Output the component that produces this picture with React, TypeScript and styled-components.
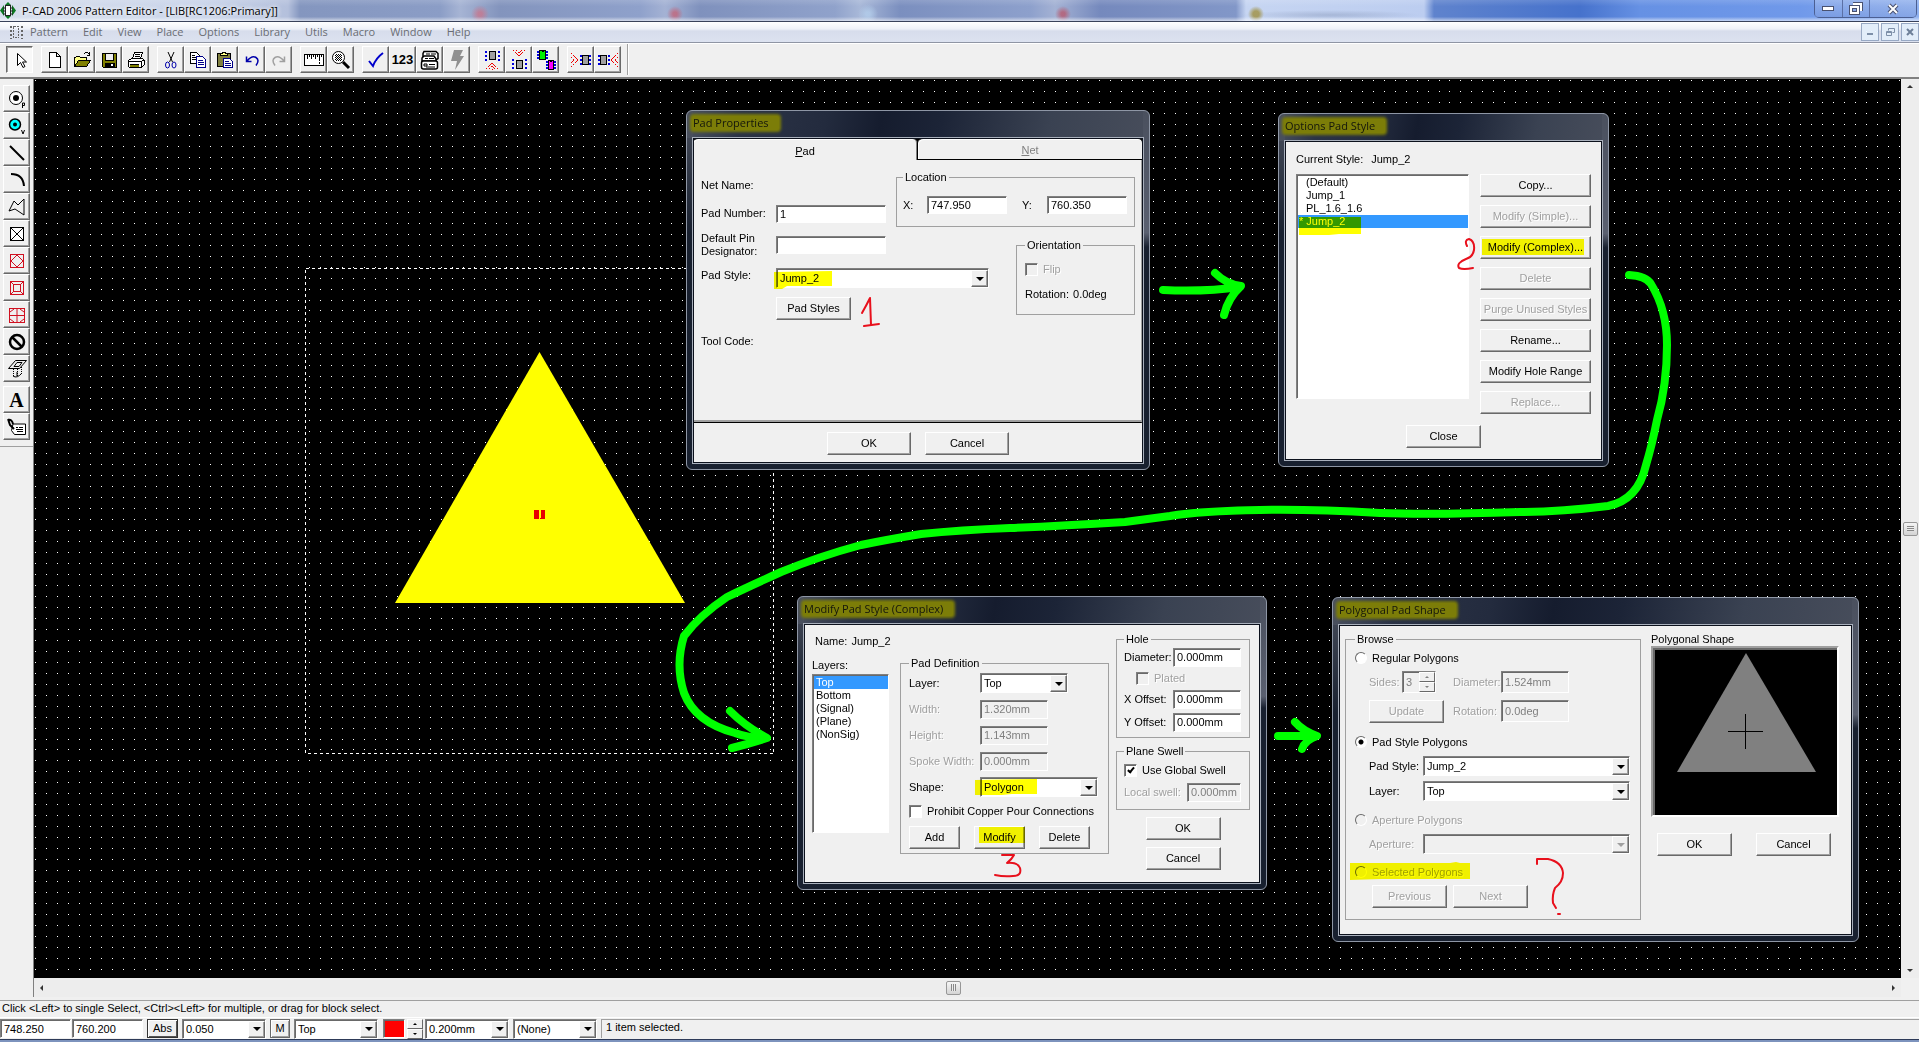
import React from "react";
import styled, { createGlobalStyle, css } from "styled-components";

const uiFont = '"Liberation Sans", Arial, sans-serif';
const chromeFont = '"Open Sans", "Noto Sans", sans-serif';
const face = "#f0f0f0";
const shade = "#a0a0a0";
const dark = "#696969";

const Global = createGlobalStyle`
  *, *::before, *::after { box-sizing: border-box; }
  html, body { margin: 0; padding: 0; height: 100%; overflow: hidden; }
  body { background: ${face}; font: 11px/13px ${uiFont}; color: #000; }
  button, input, select { font: inherit; color: inherit; margin: 0; }
`;

const Shell = styled.div`
  display: flex;
  flex-direction: column;
  height: 100vh;
`;

/* ---------- window chrome ---------- */

const TitleBar = styled.header`
  display: flex;
  align-items: center;
  height: 22px;
  padding-right: 2px;
  border-bottom: 1px solid #39425a;
  font: 11px/20px ${chromeFont};
  background:
    linear-gradient(#ffffff22, #ffffff00 30%, #ffffff00 80%, #ffffff99),
    radial-gradient(circle at 480px 14px, #e0607088 2px, #e0607000 9px),
    radial-gradient(circle at 675px 14px, #d0506099 2px, #d0506000 8px),
    radial-gradient(circle at 868px 14px, #b8d4f0aa 2px, #b8d4f000 10px),
    radial-gradient(circle at 1063px 14px, #c0405099 2px, #c0405000 8px),
    radial-gradient(circle at 1256px 14px, #a09040cc 3px, #a0904000 8px),
    radial-gradient(ellipse 90px 5px at 1330px 15px, #8090b066, #8090b000),
    linear-gradient(90deg, #d6deec 0, #c9d4ea 200px, #b4c0dc 288px, #8496bf 300px,
      #8b9dc6 440px, #a6b4d4 460px, #8394bd 500px, #8fa1cb 640px, #a4b2d4 665px,
      #7f91bd 700px, #90a2cb 835px, #a8b8d8 860px, #7b8fbf 900px, #8da0cc 1030px,
      #a4b2d4 1055px, #7589bd 1100px, #8297c8 1236px, #c6d5f2 1246px, #bccdf0 1424px,
      #5f83cd 1434px, #4672cc 1580px, #6691e4 1640px, #7099ea 1800px, #8fb1f0 100%);
`;
const AppName = styled.h1`
  flex: 1;
  margin: 0 0 0 5px;
  font: inherit;
  text-shadow: 0 0 5px #fff, 0 0 5px #fff;
`;
const Caption = styled.div`
  display: flex;
  align-self: flex-start;
  height: 18px;
  border: 1px solid #4b5f92;
  border-top: 0;
  border-radius: 0 0 5px 5px;
`;
const CaptionButton = styled.button<{ $wide?: boolean }>`
  display: grid;
  place-items: center;
  width: ${(p) => (p.$wide ? 47 : 27)}px;
  padding: 0;
  border: 0;
  background: linear-gradient(#a9c0ee88, #7d9bdc88);
  & + & { border-left: 1px solid #5b70a6; }
`;

const MenuBar = styled.nav`
  display: flex;
  align-items: center;
  gap: 15px;
  height: 21px;
  padding-left: 9px;
  border-bottom: 1px solid #8f95a4;
  background: linear-gradient(#fff 0, #eef1f8 35%, #d7ddec 45%, #dce2f0 100%);
  font: 11px/18px ${chromeFont};
  color: #6a6d74;
`;
const MenuItem = styled.a`
  color: inherit;
  text-decoration: none;
`;
const MenuGlyph = styled.svg`
  margin-right: -8px;
`;
const ChildButtons = styled.div`
  display: flex;
  gap: 2px;
  margin-left: auto;
`;
const ChildButton = styled.button`
  display: grid;
  place-items: center;
  width: 18px;
  height: 18px;
  padding: 0;
  border: 1px solid #98a9c4;
  background: #e2edf9;
`;

/* ---------- tool bars ---------- */

const TopTools = styled.div`
  display: flex;
  align-items: center;
  gap: 8px;
  height: 36px;
  padding: 0 0 2px 6px;
  border-top: 1px solid #fff;
  border-bottom: 2px solid #808080;
`;
const ToolGroup = styled.div<{ $vertical?: boolean }>`
  display: flex;
  flex-direction: ${(p) => (p.$vertical ? "column" : "row")};
`;
const ToolEnd = styled.div`
  align-self: stretch;
  width: 2px;
  margin-left: -2px;
  border-left: 1px solid ${shade};
  background: #fff;
`;
const ToolButton = styled.button<{ $pressed?: boolean }>`
  display: grid;
  place-items: center;
  width: 27px;
  height: 27px;
  padding: 0;
  border: 1px solid;
  border-color: #fff ${dark} ${dark} #fff;
  background: ${face};
  box-shadow: inset -1px -1px 0 ${shade};
  ${(p) =>
    p.$pressed &&
    css`
      border-color: ${dark} #fff #fff ${dark};
      background: #f8f8f8;
      box-shadow: inset 1px 1px 0 ${shade};
    `}
`;
const Sidebar = styled.aside`
  width: 34px;
  flex: none;
  border-right: 1px solid #808080;
`;
const SideTools = styled.div`
  display: flex;
  flex-direction: column;
  gap: 4px;
  padding: 6px 0 6px 3px;
  border-bottom: 1px solid ${shade};
`;

/* ---------- work area ---------- */

const Main = styled.main`
  display: flex;
  flex: 1;
  min-height: 0;
`;
const Workspace = styled.div`
  display: grid;
  flex: 1;
  min-width: 0;
  grid-template: minmax(0, 1fr) 19px / minmax(0, 1fr) 18px;
`;
const Canvas = styled.section`
  position: relative;
  overflow: hidden;
  isolation: isolate;
  background: #000;
`;
const Layer = styled.svg<{ $multiply?: boolean }>`
  position: absolute;
  inset: 0;
  width: 100%;
  height: 100%;
  pointer-events: none;
  mix-blend-mode: ${(p) => (p.$multiply ? "multiply" : "normal")};
`;
const ScrollTrack = styled.div<{ $vertical?: boolean }>`
  display: flex;
  flex-direction: ${(p) => (p.$vertical ? "column" : "row")};
  align-items: center;
  justify-content: space-between;
  padding: ${(p) => (p.$vertical ? "6px 0" : "0 6px")};
  background: #ededed;
`;
const ScrollThumb = styled.div<{ $before?: number }>`
  display: grid;
  place-items: center;
  width: 15px;
  height: 14px;
  margin-right: ${(p) => p.$before ?? 0}px;
  border: 1px solid #979797;
  border-radius: 2px;
  background: linear-gradient(#f5f5f5, #d4d4d4);
`;
const Grip = styled.span<{ $vertical?: boolean }>`
  width: ${(p) => (p.$vertical ? 7 : 5)}px;
  height: ${(p) => (p.$vertical ? 5 : 7)}px;
  background: repeating-linear-gradient(${(p) => (p.$vertical ? "180deg" : "90deg")}, #888 0 1px, #eee 1px 2px);
`;

/* ---------- dialogs ---------- */

const Dialog = styled.section<{ $x: number; $y: number; $w: number }>`
  position: absolute;
  left: ${(p) => p.$x}px;
  top: ${(p) => p.$y}px;
  width: ${(p) => p.$w}px;
  padding: 0 5px 5px;
  border: 1px solid #8e96a5;
  border-radius: 6px;
  background:
    linear-gradient(#4a505e, #4a505e00 34%) left / 6px 100% no-repeat,
    linear-gradient(#4a505e 0, #5a6070 34%, #18202f 38%) right / 6px 100% no-repeat,
    linear-gradient(100deg, #4a5160 0, #2b3346 12%, #232b3e 30%, #151c2e 42%, #1c2437 55%, #3a4252 78%, #474d5b 100%) top / 100% 27px no-repeat,
    #18202f;
`;
const DialogTitle = styled.h2`
  display: flex;
  align-items: center;
  height: 26px;
  margin: 0;
  padding-bottom: 2px;
  font: 11px/14px ${chromeFont};
  color: #14160c;
  span {
    padding: 0 10px 0 1px;
    background: #7c7d08;
    border-radius: 2px;
    box-shadow: 0 0 3px 2px #7c7d08;
  }
`;
const Client = styled.div<{ $pad?: string }>`
  padding: ${(p) => p.$pad ?? "0"};
  border: 1px solid #a9b0bc;
  outline: 1px solid #0c111c;
  outline-offset: -2px;
  background: ${face};
`;
const Row = styled.div<{ $h?: number; $gap?: number; $indent?: number; $align?: string; $mt?: number }>`
  display: flex;
  align-items: ${(p) => p.$align ?? "center"};
  gap: ${(p) => p.$gap ?? 0}px;
  margin-top: ${(p) => p.$mt ?? 0}px;
  min-height: ${(p) => p.$h ?? 0}px;
  padding-left: ${(p) => p.$indent ?? 0}px;
`;
const Centered = styled(Row)`
  justify-content: center;
`;
const Column = styled.div<{ $gap?: number; $w?: number; $center?: boolean }>`
  display: flex;
  flex-direction: column;
  gap: ${(p) => p.$gap ?? 0}px;
  width: ${(p) => (p.$w ? p.$w + "px" : "auto")};
  align-items: ${(p) => (p.$center ? "center" : "stretch")};
`;
const Push = styled.button<{ $w: number }>`
  width: ${(p) => p.$w}px;
  height: 23px;
  flex: none;
  padding: 0;
  border: 1px solid;
  border-color: #fff ${dark} ${dark} #fff;
  background: ${face};
  box-shadow: inset -1px -1px 0 ${shade};
  white-space: nowrap;
  &:disabled { color: ${shade}; text-shadow: 1px 1px 0 #fff; }
`;
const sunken = css`
  border: 1px solid;
  border-color: #808080 #fff #fff #808080;
  box-shadow: inset 1px 1px 0 ${dark};
  border-radius: 0;
`;
const TextBox = styled.input<{ $w: number; $h?: number }>`
  ${sunken}
  width: ${(p) => p.$w}px;
  height: ${(p) => p.$h ?? 19}px;
  flex: none;
  padding: 0 2px 0 3px;
  background: #fff;
  &:disabled { background: ${face}; color: #808080; }
`;
const Label = styled.label<{ $w?: number; $off?: boolean }>`
  flex: none;
  width: ${(p) => (p.$w ? p.$w + "px" : "auto")};
  color: ${(p) => (p.$off ? shade : "#000")};
  text-shadow: ${(p) => (p.$off ? "1px 1px 0 #fff" : "none")};
  white-space: nowrap;
`;
const Group = styled.fieldset<{ $w?: number; $pad?: string }>`
  min-width: 0;
  width: ${(p) => (p.$w ? p.$w + "px" : "auto")};
  margin: 0;
  padding: ${(p) => p.$pad ?? "0 8px"};
  border: 1px solid ${shade};
  outline: 0;
`;
const Legend = styled.legend`
  padding: 0 2px;
`;
const ComboFrame = styled.span<{ $w: number; $off?: boolean }>`
  ${sunken}
  display: flex;
  flex: none;
  width: ${(p) => p.$w}px;
  height: 20px;
  padding: 1px 0 0 1px;
  background: ${(p) => (p.$off ? face : "#fff")};
`;
const ComboSelect = styled.select`
  flex: 1;
  min-width: 0;
  padding: 0 0 0 2px;
  border: 0;
  appearance: none;
  background: transparent;
  outline: 0;
`;
const ComboArrow = styled.span`
  display: grid;
  place-items: center;
  width: 17px;
  border: 1px solid;
  border-color: #fff ${dark} ${dark} #fff;
  background: ${face};
  box-shadow: inset -1px -1px 0 ${shade};
  pointer-events: none;
`;
const ListBox = styled.select<{ $h: number }>`
  ${sunken}
  width: 100%;
  height: ${(p) => p.$h}px;
  padding: 1px 0 0 1px;
  background: #fff;
  overflow: hidden;
  outline: 0;
  option {
    min-height: 13px;
    padding: 0 2px;
    line-height: 13px;
  }
  option:checked {
    color: #fff;
    background: #3399ff linear-gradient(#3399ff, #3399ff);
  }
`;
const StyleOption = styled.option<{ $current?: boolean }>`
  && { padding-left: ${(p) => (p.$current ? 1 : 8)}px; }
`;
const Check = styled.input`
  ${sunken}
  appearance: none;
  position: relative;
  flex: none;
  width: 13px;
  height: 13px;
  background: #fff;
  &:disabled { background: ${face}; }
  &:checked::after {
    content: "";
    position: absolute;
    left: 4px;
    top: 1px;
    width: 4px;
    height: 7px;
    border: solid #000;
    border-width: 0 2px 2px 0;
    transform: rotate(40deg);
  }
`;
const Radio = styled.input`
  appearance: none;
  flex: none;
  width: 12px;
  height: 12px;
  border: 1px solid;
  border-color: ${dark} #fff #fff ${dark};
  border-radius: 50%;
  background: #fff;
  &:disabled { background: ${face}; }
  &:checked { background: radial-gradient(circle, #000 2px, #fff 3px); }
`;

const Tabs = styled.div`
  display: flex;
  height: 22px;
  background: #000;
`;
const Tab = styled.button<{ $active?: boolean }>`
  flex: 1;
  padding: 3px 0 0;
  border: 1px solid #000;
  border-width: 1px 1px ${(p) => (p.$active ? 0 : 1)}px 0;
  border-radius: 5px 5px 0 0;
  background: ${face};
  color: ${(p) => (p.$active ? "#000" : "#808080")};
  box-shadow: ${(p) => (p.$active ? "inset -1px 0 0 #808080, inset 1px 1px 0 #fff" : "inset 1px 1px 0 #fff")};
`;
const TabPanel = styled.div`
  display: grid;
  grid-template-columns: 75px 120px 120px 119px;
  grid-template-rows: 29px 27px 36px 30px 31px 34px;
  align-items: center;
  min-height: 263px;
  padding: 11px 0 0 7px;
  border-left: 1px solid #fff;
  border-right: 2px solid ${shade};
  border-bottom: 1px solid #000;
  box-shadow: inset 0 -2px 0 ${shade};
`;
const Cell = styled.div<{ $area: string; $fill?: boolean; $lift?: number; $foot?: boolean }>`
  grid-area: ${(p) => p.$area};
  align-self: ${(p) => (p.$fill ? "stretch" : p.$foot ? "end" : "center")};
  padding-bottom: ${(p) => p.$lift ?? 0}px;
  & > fieldset { height: 100%; }
`;
const Preview = styled.div`
  width: 188px;
  height: 171px;
  border: 2px solid;
  border-color: ${shade} #fff #fff ${shade};
  background: #000;
  box-shadow: inset 2px 2px 0 ${dark};
`;
const SpinStack = styled.span`
  display: flex;
  flex-direction: column;
  flex: none;
`;
const SpinButton = styled.button`
  display: grid;
  place-items: center;
  width: 16px;
  height: 10px;
  padding: 0;
  border: 1px solid;
  border-color: #fff ${dark} ${dark} #fff;
  background: ${face};
`;
const SpinFrame = styled.span`
  ${sunken}
  display: flex;
  flex: none;
  width: 34px;
  height: 22px;
  margin-right: 17px;
  background: ${face};
  input {
    flex: 1;
    min-width: 0;
    padding: 0 0 0 3px;
    border: 0;
    background: transparent;
    color: #808080;
  }
`;

/* ---------- status ---------- */

const Prompt = styled.div`
  height: 18px;
  margin-top: 3px;
  padding-left: 2px;
  border-top: 1px solid ${shade};
  border-bottom: 1px solid #fff;
  line-height: 15px;
`;
const StatusRow = styled.footer`
  display: flex;
  align-items: center;
  height: 21px;
  gap: 4px;
`;
const Coords = styled.div`
  display: flex;
  gap: 1px;
`;
const StatusButton = styled.button<{ $w: number; $on?: boolean }>`
  width: ${(p) => p.$w}px;
  height: 19px;
  padding: 0;
  border: 1px solid ${(p) => (p.$on ? "#333" : dark)};
  background: ${face};
  box-shadow: inset 1px 1px 0 #fff, inset -1px -1px 0 ${(p) => (p.$on ? "#555" : shade)};
`;
const LineWidth = styled.div`
  display: flex;
  align-items: center;
  gap: 2px;
  padding-left: 1px;
`;
const Swatch = styled.span`
  ${sunken}
  width: 22px;
  height: 19px;
  background: #f00;
`;
const Selected = styled.output`
  flex: 1;
  height: 19px;
  padding: 1px 0 0 4px;
  border-top: 1px solid ${shade};
  border-left: 1px solid ${shade};
`;
const Taskbar = styled.div`
  height: 3px;
  border-top: 1px solid #2d3a58;
  background: #7d93bd;
`;

/* ---------- glyphs ---------- */

const Arrow = ({ dir, color = "#000", size = 4 }: { dir: "up" | "down" | "left" | "right"; color?: string; size?: number }) => {
  const s = size;
  const pts = {
    up: `0,${s} ${s},0 ${2 * s},${s}`,
    down: `0,0 ${2 * s},0 ${s},${s}`,
    left: `${s},0 ${s},${2 * s} 0,${s}`,
    right: `0,0 0,${2 * s} ${s},${s}`,
  }[dir];
  const flat = dir === "up" || dir === "down";
  return (
    <svg width={flat ? 2 * s : s} height={flat ? s : 2 * s} aria-hidden="true">
      <polygon points={pts} fill={color} />
    </svg>
  );
};

const Icon = ({ children, crisp = true }: { children: React.ReactNode; crisp?: boolean }) => (
  <svg width="22" height="22" viewBox="0 0 22 22" fill="none" stroke="#000" shapeRendering={crisp ? "crispEdges" : "auto"} aria-hidden="true">
    {children}
  </svg>
);

const Chip = ({ x, y, fill, w = 7 }: { x: number; y: number; fill: string; w?: number }) => (
  <g>
    <path d={`M${x - 2} ${y + 1.5}h${w + 4}M${x - 2} ${y + 4.5}h${w + 4}M${x - 2} ${y + 7.5}h${w + 4}`} stroke="#00d" strokeWidth="2" />
    <rect x={x + 0.5} y={y + 0.5} width={w - 1} height="9" fill={fill} />
    <path d={`M${x + w / 2 - 1} ${y + 1.5}h2`} />
  </g>
);

const icons: Record<string, React.ReactNode> = {
  select: <Icon crisp={false}><path d="M8.500 4.500v12l3-3 2.500 5 2-1-2.500-4.500h4z" fill="#fff" /></Icon>,
  create: <Icon><path d="M5.500 3.500h7l4 4v11h-11zM12.500 3.500v4h4" fill="#fff" /></Icon>,
  open: <Icon><path d="M3.500 17.500v-9h1l1-1h3l1 1h6v3" fill="#ff8" /><path d="M3.500 17.500l4-6h12l-4 6z" fill="#808000" /><path d="M12.500 5.500l2-2h2l2 2M18.500 3v3.500h-3" /></Icon>,
  save: <Icon><path d="M4.500 4.500h14v14h-13l-1-1z" fill="#808000" /><rect x="7.500" y="4.500" width="8" height="7" fill="#eee" /><path d="M7 14h9v4h-9z" fill="#000" /><path d="M13 15.500h2M13 16.500h2" stroke="#fff" /></Icon>,
  print: <Icon><path d="M7.500 9.500l2-6h8l-2 6z" fill="#fff" /><path d="M10 5.500h5M9.500 7.500h5" /><path d="M3.500 11.500l3-2h11l2 2v4l-3 3h-12l-1-1z" fill="#fff" /><path d="M3.500 12.500h13l3-2M16.500 12.500v6M5 15.500h9" /><path d="M5 17h9" stroke="#808000" strokeWidth="2" /></Icon>,
  cut: <Icon crisp={false}><path d="M8 3l4.500 10M14 3L9.500 13" /><ellipse cx="7.500" cy="16" rx="2" ry="3" stroke="#00a" /><ellipse cx="14" cy="16" rx="2" ry="3" stroke="#00a" /></Icon>,
  copy: <Icon><path d="M3.500 3.500h6l3 3v8h-9z" fill="#fff" /><path d="M5 6.500h3M5 8.500h5M5 10.500h5" /><path d="M9.500 7.500h6l3 3v8h-9z" fill="#fff" stroke="#008" /><path d="M11 11.500h5M11 13.500h6M11 15.500h6" stroke="#008" /></Icon>,
  paste: <Icon><rect x="3.500" y="4.500" width="13" height="13" rx="1" fill="#808040" /><path d="M6.500 6.500h7v-2h-2v-1h-3v1h-2z" fill="#ff8" /><path d="M9.500 9.500h6l3 3v6h-9z" fill="#fff" stroke="#008" /><path d="M11 12.500h4M11 14.500h6M11 16.500h6" stroke="#008" /></Icon>,
  undo: <Icon crisp={false}><path d="M5.500 7.500v5h5M6 12q5-6 9-3.500t0 8" stroke="#00a" strokeWidth="1.500" /></Icon>,
  redo: <Icon crisp={false}><path d="M16.500 7.500v5h-5M16 12q-5-6-9-3.500t0 8" stroke="#a0a0a0" strokeWidth="1.500" /></Icon>,
  ruler: <Icon><rect x="1.500" y="5.500" width="19" height="11" fill="#fff" /><path d="M4.500 6v4M6.500 6v2M8.500 6v4M10.500 6v2M12.500 6v4M14.500 6v2M16.500 6v6M18.500 6v2M16.500 13v2" /></Icon>,
  zoom: <Icon crisp={false}><circle cx="8.500" cy="8.500" r="6" fill="#fff" /><path d="M5 6.500h7M5 8.500h7M5 10.500h7M6.500 5v7M8.500 5v7M10.500 5v7" strokeDasharray="1 1" /><path d="M13 13l6 6" strokeWidth="3" /></Icon>,
  check: <Icon crisp={false}><path d="M4 12l4 5q3-8 10-13" stroke="#00c" strokeWidth="2" /></Icon>,
  layers: <Icon crisp={false}><path d="M5 2.500h12l2 2v5l-3 2H6l-2-2v-5z" fill="#fff" strokeWidth="1.500" /><path d="M3 12V9l2-2h10l2 3v2z" fill="#fff" strokeWidth="1.500" /><rect x="2.500" y="12" width="16" height="8" rx="2" fill="#fff" strokeWidth="1.500" /><path d="M7 5h4M12 5h5M6 9.500h3M10 9.500h5M5 15h3v2H5zM10 15.500h6M7 18h9" /></Icon>,
  bolt: <Icon crisp={false}><path d="M8 1h9l-3 6h4l-9 14 2-9H5z" fill="#909090" stroke="none" /></Icon>,
  align1: <Icon><path d="M4.500 2v10M17.500 2v10" stroke="#00d" strokeWidth="2" strokeDasharray="2 2" /><rect x="8.500" y="2.500" width="6" height="8" fill="#a0a0a0" /><path d="M5 20l6-6 6 6M8 20l3-3 3 3M10.500 20h1" stroke="#e00" strokeDasharray="2 1" /></Icon>,
  align2: <Icon><path d="M4.500 10v10M17.500 10v10" stroke="#00d" strokeWidth="2" strokeDasharray="2 2" /><rect x="8.500" y="11.500" width="6" height="8" fill="#a0a0a0" /><path d="M5 1l6 6 6-6M8 1l3 3 3-3" stroke="#e00" strokeDasharray="2 1" /></Icon>,
  swap: <Icon><Chip x={4} y={1} fill="#0e0" /><Chip x={13} y={11} fill="#f0f" w={6} /></Icon>,
  right: <Icon><path d="M1 4l7 7-7 7M1 8l3 3-3 3" stroke="#e00" strokeDasharray="2 1" /><path d="M10.500 6v11M20 6v11" stroke="#00d" strokeWidth="2" strokeDasharray="2 2" /><rect x="12.500" y="6.500" width="6" height="9" fill="#a0a0a0" /></Icon>,
  left: <Icon><path d="M21 4l-7 7 7 7M21 8l-3 3 3 3" stroke="#e00" strokeDasharray="2 1" /><path d="M2 6v11M11.500 6v11" stroke="#00d" strokeWidth="2" strokeDasharray="2 2" /><rect x="3.500" y="6.500" width="6" height="9" fill="#a0a0a0" /></Icon>,
  pad: <Icon crisp={false}><circle cx="10" cy="10" r="6.500" fill="#fff" /><circle cx="10" cy="10" r="3" fill="#000" stroke="none" /><path d="M16.500 20v-5h2v2.500h-2" /></Icon>,
  via: <Icon crisp={false}><circle cx="9" cy="9.500" r="5.500" fill="#0ff" strokeWidth="1.500" /><circle cx="9" cy="9.500" r="2" fill="#000" stroke="none" /><path d="M15.500 15l1.500 4 1.500-4" /></Icon>,
  line: <Icon crisp={false}><path d="M4 4l14 14" strokeWidth="2" /></Icon>,
  arc: <Icon crisp={false}><path d="M5 5q12 0 13 12" strokeWidth="2" /></Icon>,
  poly: <Icon crisp={false}><path d="M3 15l5-10 4 4 6-6v16L9 13z" /></Icon>,
  point: <Icon><rect x="4.500" y="4.500" width="13" height="13" fill="#fff" /><path d="M5 5l12 12M17 5L5 17" /></Icon>,
  pour: <Icon><g stroke="#d01020"><rect x="4.500" y="4.500" width="13" height="13" /><path d="M11 5l6 6-6 6-6-6z" /></g></Icon>,
  cutout: <Icon><g stroke="#d01020"><rect x="4.500" y="4.500" width="13" height="13" /><rect x="7.500" y="7.500" width="7" height="7" /><path d="M5 5l3 3M17 5l-3 3M5 17l3-3M17 17l-3-3" /></g></Icon>,
  plane: <Icon crisp={false}><g stroke="#d01020"><rect x="3.500" y="4.500" width="15" height="14" /><path d="M4 8l4-3M18 8l-4-3M4 15l4 3M18 15l-4 3" /><path d="M11 5v13M4 11.500h14" /></g></Icon>,
  keepout: <Icon crisp={false}><circle cx="11" cy="11" r="7" strokeWidth="2.500" /><path d="M6 6l10 10" strokeWidth="2.500" /></Icon>,
  room: <Icon crisp={false}><path d="M2.500 10.500l7-8h11l-7 8zM8 8.500l3-4h5l-3 4z" /><path d="M7.500 11v7M11.500 11v7M15.500 9v7" strokeDasharray="1 1" /><path d="M7 18q4 3 9-3M11 14v4" /></Icon>,
  attr: <Icon crisp={false}><path d="M7 8h12.500v10.500h-11l-3-4z" fill="#fff" /><path d="M10 11.500h2M13 11.500h4M10 13.500h7M11 15.500h6" /><path d="M2 3l2 6 4 4M2 4q4-1 5 4" strokeWidth="2" /></Icon>,
};

const TextGlyph = styled.span<{ $serif?: boolean }>`
  font: bold ${(p) => (p.$serif ? `20px/22px "Liberation Serif", serif` : `13px/22px ${uiFont}`)};
`;

/* ---------- small composites ---------- */

const Combo = ({ id, w, value, off, label }: { id: string; w: number; value: string; off?: boolean; label?: string }) => (
  <ComboFrame $w={w} $off={off}>
    <ComboSelect id={id} disabled={off} aria-label={label}>
      <option>{value}</option>
    </ComboSelect>
    <ComboArrow><Arrow dir="down" color={off ? shade : "#000"} /></ComboArrow>
  </ComboFrame>
);

const Field = ({ id, label, lw, w, value, off, h }: { id: string; label: string; lw: number; w: number; value: string; off?: boolean; h?: number }) => (
  <>
    <Label htmlFor={id} $w={lw} $off={off}>{label}</Label>
    <TextBox id={id} $w={w} $h={h} defaultValue={value} disabled={off} />
  </>
);

const Tool = ({ name, label, pressed }: { name: string; label: string; pressed?: boolean }) => (
  <ToolButton type="button" aria-label={label} $pressed={pressed}>{icons[name]}</ToolButton>
);

const menus = ["Pattern", "Edit", "View", "Place", "Options", "Library", "Utils", "Macro", "Window", "Help"];

/* Grid snaps each point to a whole pixel, so the pitch alternates between 11 and 10. */
const gridPath = (() => {
  let d = "";
  for (let j = 0; j < 100; j++) {
    const y = 1 + Math.round(j * 10.975);
    for (let i = 0; i < 240; i++) d += `M${1 + Math.round(i * 10.965)} ${y}h1v1h-1z`;
  }
  return d;
})();

const PadProperties = () => (
  <Dialog $x={652} $y={31} $w={464} aria-label="Pad Properties">
    <DialogTitle><span>Pad Properties</span></DialogTitle>
    <Client>
      <Tabs role="tablist">
        <Tab type="button" role="tab" $active><u>P</u>ad</Tab>
        <Tab type="button" role="tab"><u>N</u>et</Tab>
      </Tabs>
      <TabPanel>
        <Cell $area="1 / 1">Net Name:</Cell>
        <Cell $area="2 / 1"><Label htmlFor="padNumber">Pad Number:</Label></Cell>
        <Cell $area="2 / 2"><TextBox id="padNumber" $w={110} $h={18} defaultValue="1" /></Cell>
        <Cell $area="3 / 1"><Label htmlFor="pinDes">Default Pin<br />Designator:</Label></Cell>
        <Cell $area="3 / 2"><TextBox id="pinDes" $w={110} $h={18} defaultValue="" /></Cell>
        <Cell $area="4 / 1" $lift={6}><Label htmlFor="padStyle">Pad Style:</Label></Cell>
        <Cell $area="4 / 2 / 5 / 4"><Combo id="padStyle" w={213} value="Jump_2" /></Cell>
        <Cell $area="5 / 2"><Push type="button" $w={75}>Pad Styles</Push></Cell>
        <Cell $area="6 / 1">Tool Code:</Cell>
        <Cell $area="1 / 3 / 3 / 5" $fill>
          <Group $pad="0 6px">
            <Legend>Location</Legend>
            <Row $h={42}>
              <Field id="locX" label="X:" lw={24} w={80} h={18} value="747.950" />
              <Row $indent={15}><Field id="locY" label="Y:" lw={25} w={80} h={18} value="760.350" /></Row>
            </Row>
          </Group>
        </Cell>
        <Cell $area="3 / 4 / 6 / 5" $foot $lift={9}>
          <Group>
            <Legend>Orientation</Legend>
            <Row $h={35} $gap={5}>
              <Check type="checkbox" id="flip" disabled />
              <Label htmlFor="flip" $off>Flip</Label>
            </Row>
            <Row $h={26} $mt={1} $gap={4} $align="flex-start"><span>Rotation:</span><span>0.0deg</span></Row>
          </Group>
        </Cell>
      </TabPanel>
      <Centered $h={40} $gap={14}>
        <Push type="button" $w={84}>OK</Push>
        <Push type="button" $w={84}>Cancel</Push>
      </Centered>
    </Client>
  </Dialog>
);

const OptionsPadStyle = () => (
  <Dialog $x={1244} $y={34} $w={331} aria-label="Options Pad Style">
    <DialogTitle><span>Options Pad Style</span></DialogTitle>
    <Client $pad="12px 11px">
      <Row $h={21} $gap={8} $align="flex-start"><Label htmlFor="styles">Current Style:</Label><span>Jump_2</span></Row>
      <Row $gap={11} $align="flex-start">
        <Column $w={173}>
          <ListBox id="styles" size={8} $h={225} defaultValue="Jump_2">
            <StyleOption>(Default)</StyleOption>
            <StyleOption>Jump_1</StyleOption>
            <StyleOption>PL_1.6_1.6</StyleOption>
            <StyleOption value="Jump_2" $current>* Jump_2</StyleOption>
          </ListBox>
        </Column>
        <Column $gap={8}>
          <Push type="button" $w={111}>Copy...</Push>
          <Push type="button" $w={111} disabled>Modify (Simple)...</Push>
          <Push type="button" $w={111}>Modify (Complex)...</Push>
          <Push type="button" $w={111} disabled>Delete</Push>
          <Push type="button" $w={111} disabled>Purge Unused Styles</Push>
          <Push type="button" $w={111}>Rename...</Push>
          <Push type="button" $w={111}>Modify Hole Range</Push>
          <Push type="button" $w={111} disabled>Replace...</Push>
        </Column>
      </Row>
      <Centered $mt={11}><Push type="button" $w={75}>Close</Push></Centered>
    </Client>
  </Dialog>
);

const ModifyPadStyle = () => (
  <Dialog $x={763} $y={517} $w={470} aria-label="Modify Pad Style (Complex)">
    <DialogTitle><span>Modify Pad Style (Complex)</span></DialogTitle>
    <Client $pad="9px 8px 13px">
      <Row $gap={7} $align="flex-start">
        <Column>
          <Row $h={22} $mt={2} $gap={4} $indent={3} $align="flex-start"><span>Name:</span><span>Jump_2</span></Row>
          <Row $gap={11} $align="flex-start">
            <Column $w={77}>
              <Row $h={17}><Label htmlFor="layers">Layers:</Label></Row>
              <ListBox id="layers" size={8} $h={159} defaultValue="Top">
                <option>Top</option>
                <option>Bottom</option>
                <option>(Signal)</option>
                <option>(Plane)</option>
                <option>(NonSig)</option>
              </ListBox>
            </Column>
            <Group $w={209}>
              <Legend>Pad Definition</Legend>
              <Row $h={26}><Label htmlFor="defLayer" $w={71}>Layer:</Label><Combo id="defLayer" w={88} value="Top" /></Row>
              <Row $h={26}><Field id="width" label="Width:" lw={71} w={68} value="1.320mm" off /></Row>
              <Row $h={26}><Field id="height" label="Height:" lw={71} w={68} value="1.143mm" off /></Row>
              <Row $h={26}><Field id="spoke" label="Spoke Width:" lw={71} w={68} value="0.000mm" off /></Row>
              <Row $h={26}><Label htmlFor="shape" $w={71}>Shape:</Label><Combo id="shape" w={118} value="Polygon" /></Row>
              <Row $h={22} $gap={5}>
                <Check type="checkbox" id="prohibit" />
                <Label htmlFor="prohibit">Prohibit Copper Pour Connections</Label>
              </Row>
              <Row $h={31} $gap={14}>
                <Push type="button" $w={51}>Add</Push>
                <Push type="button" $w={51}>Modify</Push>
                <Push type="button" $w={51}>Delete</Push>
              </Row>
            </Group>
          </Row>
        </Column>
        <Column $w={134} $gap={7} $center>
          <Group $w={134} $pad="0 7px 3px">
            <Legend>Hole</Legend>
            <Row $h={22}><Field id="holeDia" label="Diameter:" lw={49} w={68} value="0.000mm" /></Row>
            <Row $h={20} $gap={5} $indent={12}>
              <Check type="checkbox" id="plated" disabled />
              <Label htmlFor="plated" $off>Plated</Label>
            </Row>
            <Row $h={22}><Field id="xOff" label="X Offset:" lw={49} w={68} value="0.000mm" /></Row>
            <Row $h={24}><Field id="yOff" label="Y Offset:" lw={49} w={68} value="0.000mm" /></Row>
          </Group>
          <Group $w={134} $pad="0 7px 7px">
            <Legend>Plane Swell</Legend>
            <Row $h={24} $gap={5}>
              <Check type="checkbox" id="global" defaultChecked />
              <Label htmlFor="global">Use Global Swell</Label>
            </Row>
            <Row $h={20}><Field id="swell" label="Local swell:" lw={63} w={54} value="0.000mm" off /></Row>
          </Group>
          <Push type="button" $w={75}>OK</Push>
          <Push type="button" $w={75}>Cancel</Push>
        </Column>
      </Row>
    </Client>
  </Dialog>
);

const PolygonalPadShape = () => (
  <Dialog $x={1298} $y={518} $w={527} aria-label="Polygonal Pad Shape">
    <DialogTitle><span>Polygonal Pad Shape</span></DialogTitle>
    <Client $pad="8px 6px 15px">
      <Row $gap={10} $align="flex-start">
        <Group $w={296} $pad="0 9px 11px">
          <Legend>Browse</Legend>
          <Row $h={24} $gap={5}><Radio type="radio" name="src" id="regular" /><Label htmlFor="regular">Regular Polygons</Label></Row>
          <Row $h={24} $indent={14}>
            <Label htmlFor="sides" $w={33} $off>Sides:</Label>
            <SpinFrame>
              <input id="sides" defaultValue="3" disabled />
              <SpinStack>
                <SpinButton type="button" aria-label="More sides" disabled><Arrow dir="up" size={2} color="#808080" /></SpinButton>
                <SpinButton type="button" aria-label="Fewer sides" disabled><Arrow dir="down" size={2} color="#808080" /></SpinButton>
              </SpinStack>
            </SpinFrame>
            <Field id="polyDia" label="Diameter:" lw={48} w={68} h={22} value="1.524mm" off />
          </Row>
          <Row $h={34} $indent={14}>
            <Push type="button" $w={75} disabled>Update</Push>
            <Row $indent={9}><Field id="polyRot" label="Rotation:" lw={48} w={68} h={22} value="0.0deg" off /></Row>
          </Row>
          <Row $h={28} $gap={5}><Radio type="radio" name="src" id="padPoly" defaultChecked /><Label htmlFor="padPoly">Pad Style Polygons</Label></Row>
          <Row $h={20} $indent={14}><Label htmlFor="polyStyle" $w={54}>Pad Style:</Label><Combo id="polyStyle" w={207} value="Jump_2" /></Row>
          <Row $h={30} $indent={14}><Label htmlFor="polyLayer" $w={54}>Layer:</Label><Combo id="polyLayer" w={207} value="Top" /></Row>
          <Row $h={28} $gap={5}><Radio type="radio" name="src" id="apPoly" disabled /><Label htmlFor="apPoly" $off>Aperture Polygons</Label></Row>
          <Row $h={20} $indent={14}><Label htmlFor="aperture" $w={54} $off>Aperture:</Label><Combo id="aperture" w={207} value="" off /></Row>
          <Row $h={26} $mt={5} $gap={5}><Radio type="radio" name="src" id="selPoly" disabled /><Label htmlFor="selPoly" $off>Selected Polygons</Label></Row>
          <Row $gap={6} $indent={17}>
            <Push type="button" $w={75} disabled>Previous</Push>
            <Push type="button" $w={75} disabled>Next</Push>
          </Row>
        </Group>
        <Column>
          <span>Polygonal Shape</span>
          <Preview>
            <svg width="184" height="167" viewBox="0 0 184 167" role="img" aria-label="Polygon preview">
              <polygon points="93,5 163,124 24,124" fill="#808080" />
              <path d="M75 83.500h35M92.500 66v35" stroke="#000" fill="none" />
            </svg>
          </Preview>
          <Row $mt={16} $gap={24} $indent={6}>
            <Push type="button" $w={75}>OK</Push>
            <Push type="button" $w={75}>Cancel</Push>
          </Row>
        </Column>
      </Row>
    </Client>
  </Dialog>
);

export default function App() {
  return (
    <Shell>
      <Global />
      <TitleBar>
        <svg width="17" height="17" viewBox="0 0 17 17" aria-hidden="true">
          <path d="M4 3L0 8.500 4 14zM12 3l4 5.500-4 5.500zM8 0l3 3H5zM8 17l3-3H5z" fill="#0a7a20" />
          <rect x="5.500" y="3.500" width="5" height="10" fill="#fff" stroke="#222" />
          <path d="M3 6h2M3 9h2M3 12h2M11 6h2M11 9h2M11 12h2" stroke="#222" />
        </svg>
        <AppName>P-CAD 2006 Pattern Editor - [LIB[RC1206:Primary]]</AppName>
        <Caption>
          <CaptionButton type="button" aria-label="Minimize">
            <svg width="13" height="6"><rect x="0.500" y="0.500" width="11" height="4" fill="#fff" stroke="#4a5270" /></svg>
          </CaptionButton>
          <CaptionButton type="button" aria-label="Restore">
            <svg width="14" height="13" fill="none"><path d="M4 2h8v7M2 5h7v6H2z" stroke="#4a5270" strokeWidth="4" /><path d="M4 2h8v7M2 5h7v6H2z" stroke="#fff" strokeWidth="2" /></svg>
          </CaptionButton>
          <CaptionButton type="button" aria-label="Close" $wide>
            <svg width="13" height="12"><path d="M2 2l8 8M10 2l-8 8" stroke="#4a5270" strokeWidth="4" /><path d="M2 2l8 8M10 2l-8 8" stroke="#fff" strokeWidth="2" /></svg>
          </CaptionButton>
        </Caption>
      </TitleBar>
      <MenuBar>
        <MenuGlyph width="14" height="14" viewBox="0 0 14 14" fill="none" stroke="#666" shapeRendering="crispEdges" aria-hidden="true">
          <path d="M1.500 1v13M12.500 1v13" strokeWidth="2" strokeDasharray="2 2" />
          <path d="M4.500 1.500h5v11h-5z" strokeDasharray="2 1" />
        </MenuGlyph>
        {menus.map((m) => <MenuItem key={m} href="#">{m}</MenuItem>)}
        <ChildButtons>
          <ChildButton type="button" aria-label="Minimize document"><svg width="8" height="8"><path d="M1 6h6" stroke="#7d8fa8" strokeWidth="2" /></svg></ChildButton>
          <ChildButton type="button" aria-label="Restore document"><svg width="9" height="9" fill="none"><path d="M2.500 2.500v-2h6v4h-2M0.500 3.500h5v4h-5zM1 4.500h5" stroke="#7d8fa8" /></svg></ChildButton>
          <ChildButton type="button" aria-label="Close document"><svg width="8" height="8"><path d="M1 1l6 6M7 1L1 7" stroke="#6d7f98" strokeWidth="2" /></svg></ChildButton>
        </ChildButtons>
      </MenuBar>
      <TopTools>
        <ToolGroup><Tool name="select" label="Select" pressed /></ToolGroup>
        <ToolGroup>
          <Tool name="create" label="New" /><Tool name="open" label="Open" /><Tool name="save" label="Save" /><Tool name="print" label="Print" />
        </ToolGroup>
        <ToolGroup>
          <Tool name="cut" label="Cut" /><Tool name="copy" label="Copy" /><Tool name="paste" label="Paste" /><Tool name="undo" label="Undo" /><Tool name="redo" label="Redo" />
        </ToolGroup>
        <ToolGroup><Tool name="ruler" label="Measure" /><Tool name="zoom" label="Zoom" /></ToolGroup>
        <ToolGroup>
          <Tool name="check" label="Validate" />
          <ToolButton type="button"><TextGlyph>123</TextGlyph></ToolButton>
          <Tool name="layers" label="Pattern view" /><Tool name="bolt" label="Record" />
        </ToolGroup>
        <ToolGroup><Tool name="align1" label="Move up" /><Tool name="align2" label="Move down" /><Tool name="swap" label="Swap" /></ToolGroup>
        <ToolGroup><Tool name="right" label="Shift right" /><Tool name="left" label="Shift left" /></ToolGroup>
        <ToolEnd />
      </TopTools>
      <Main>
        <Sidebar>
          <SideTools>
            <ToolGroup $vertical>
              {["pad", "via", "line", "arc", "poly", "point", "pour", "cutout", "plane", "keepout", "room"].map((n) => (
                <Tool key={n} name={n} label={`Place ${n}`} />
              ))}
            </ToolGroup>
            <ToolGroup $vertical>
              <ToolButton type="button"><TextGlyph $serif>A</TextGlyph></ToolButton>
              <Tool name="attr" label="Place attribute" />
            </ToolGroup>
          </SideTools>
        </Sidebar>
        <Workspace>
          <Canvas>
            <Layer>
              <path d={gridPath} fill="#fff" shapeRendering="crispEdges" />
              <polygon points="505.500,273 651,524 361,524" fill="#ff0" />
              <path d="M500 431h5v9h-5zM507 431h4v9h-5v-1h1z" fill="#e80000" />
              <rect x="271.500" y="189.500" width="468" height="485" fill="none" stroke="#fff" strokeDasharray="3 3" shapeRendering="crispEdges" />
            </Layer>
            <PadProperties />
            <OptionsPadStyle />
            <ModifyPadStyle />
            <PolygonalPadShape />
            <Layer $multiply>
              <g transform="translate(-34 -79)" fill="#ff0">
                <path d="M774 272l58-1v15h-45l-5 3h-8z" />
                <path d="M1299 217h62v17h-22l-10 1h-30z" />
                <path d="M1482 239h102v16h-102z" />
                <path d="M975 780l62-1v15h-25l-10 1h-27z" />
                <path d="M979 827h46v16h-46z" />
                <path d="M1350 863h100l6-1 4 1h10v16h-88l-32 1z" />
              </g>
            </Layer>
            <Layer fill="none" strokeLinecap="round" strokeLinejoin="round">
              <g transform="translate(-34 -79)">
                <g stroke="#0f0" strokeWidth="8">
                  <path d="M1163 290Q1205 292 1240 287M1215 273Q1226 284 1241 286Q1228 298 1224 315" />
                  <path d="M1629 275Q1646 276 1651 284Q1667 310 1667 345Q1667 385 1657 420Q1652 445 1646 465Q1638 500 1608 506Q1560 512 1520 512Q1430 515 1380 513Q1310 509 1260 510Q1200 511 1170 516Q1140 520 1125 522Q1060 526 1010 528Q960 530 921 534Q885 540 861 545Q820 556 781 572Q750 586 727 597Q700 615 684 636Q675 665 684 693Q695 722 735 733Q748 738 765 738" />
                  <path d="M730 711Q745 726 767 738Q748 744 732 748" />
                  <path d="M1278 736H1316M1295 722Q1303 731 1317 736Q1305 740 1302 749" />
                </g>
                <g stroke="#e8101c" strokeWidth="2">
                  <path d="M862 313Q866 306 870 298L871 325M864 326L879 324" />
                  <path d="M1467 246Q1464 240 1469 239Q1475 241 1474 250Q1473 257 1466 259Q1456 263 1459 268Q1463 270 1473 268" />
                  <path d="M1002 855H1014Q1012 859 1007 863Q1018 862 1020 868Q1022 876 1013 876Q1004 877 995 875" />
                  <path d="M1537 864V859H1548Q1562 862 1563 873Q1563 882 1555 888Q1552 895 1553 903L1556 908M1558 914h2" />
                </g>
              </g>
            </Layer>
          </Canvas>
          <ScrollTrack $vertical>
            <Arrow dir="up" color="#333" size={3} />
            <ScrollThumb><Grip $vertical /></ScrollThumb>
            <Arrow dir="down" color="#333" size={3} />
          </ScrollTrack>
          <ScrollTrack>
            <Arrow dir="left" color="#333" size={3} />
            <ScrollThumb $before={28}><Grip /></ScrollThumb>
            <Arrow dir="right" color="#333" size={3} />
          </ScrollTrack>
        </Workspace>
      </Main>
      <Prompt>{"Click <Left> to single Select, <Ctrl><Left> for multiple, or drag for block select."}</Prompt>
      <StatusRow>
        <Coords>
          <TextBox $w={71} defaultValue="748.250" aria-label="X position" />
          <TextBox $w={71} defaultValue="760.200" aria-label="Y position" />
        </Coords>
        <StatusButton type="button" $w={31} $on>Abs</StatusButton>
        <Combo id="gridStep" w={84} value="0.050" label="Grid" />
        <StatusButton type="button" $w={20}>M</StatusButton>
        <Combo id="activeLayer" w={84} value="Top" label="Active layer" />
        <LineWidth>
          <Swatch />
          <SpinStack>
            <SpinButton type="button" aria-label="Next layer"><Arrow dir="up" size={2} /></SpinButton>
            <SpinButton type="button" aria-label="Previous layer"><Arrow dir="down" size={2} /></SpinButton>
          </SpinStack>
          <Combo id="lineWidth" w={84} value="0.200mm" label="Line width" />
        </LineWidth>
        <Combo id="padSet" w={84} value="(None)" label="Pad set" />
        <Selected>1 item selected.</Selected>
      </StatusRow>
      <Taskbar />
    </Shell>
  );
}
